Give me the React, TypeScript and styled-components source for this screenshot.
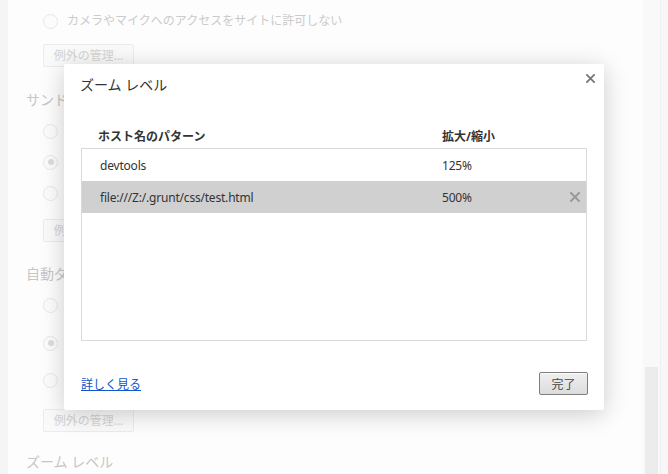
import React from 'react';
import styled, { createGlobalStyle } from 'styled-components';

const GlobalStyle = createGlobalStyle`
  html, body {
    margin: 0;
    padding: 0;
  }
  body {
    width: 668px;
    height: 474px;
    overflow: hidden;
    background: #fdfdfd;
    font-family: "Noto Sans", "Noto Sans CJK JP", sans-serif;
  }
`;

const Page = styled.div`
  position: relative;
  display: flex;
  width: 668px;
  height: 474px;
  overflow: hidden;
  background: #fdfdfd;
`;

const SideStrip = styled.div`
  flex: none;
  width: 8px;
  background: #f5f5f5;
`;

const Settings = styled.div`
  flex: 1;
  display: flex;
  flex-direction: column;
  align-items: flex-start;
  padding: 9px 0 0 18px;
  font-size: 12px;
  color: #cbcbcb;
`;

const SectionTitle = styled.div<{ gap: number }>`
  box-sizing: border-box;
  margin-top: ${p => p.gap}px;
  height: 20px;
  padding-top: 2px;
  line-height: 16px;
  font-size: 14px;
  color: #c6c6c6;
  white-space: nowrap;
`;

const RadioRow = styled.div<{ gap: number; tall?: boolean }>`
  display: flex;
  align-items: center;
  gap: 9px;
  margin-top: ${p => p.gap}px;
  margin-left: 17px;
  height: ${p => (p.tall ? 36 : 24)}px;
  line-height: ${p => (p.tall ? 17 : 24)}px;
  white-space: nowrap;
`;

const Radio = styled.span<{ checked?: boolean }>`
  flex: none;
  box-sizing: border-box;
  width: 15px;
  height: 15px;
  border-radius: 50%;
  border: 1px solid #e8e8e8;
  background: #fcfcfc;
  display: flex;
  align-items: center;
  justify-content: center;

  &::after {
    content: '';
    display: ${p => (p.checked ? 'block' : 'none')};
    width: 6px;
    height: 6px;
    border-radius: 50%;
    background: #dcdcdc;
  }
`;

const GhostButton = styled.div<{ gap: number }>`
  box-sizing: border-box;
  margin-top: ${p => p.gap}px;
  margin-left: 17px;
  width: 91px;
  height: 23px;
  line-height: 21px;
  border: 1px solid #ececec;
  border-radius: 2px;
  background: #fafafa;
  color: #d4d4d4;
  text-align: center;
  white-space: nowrap;
`;

const ScrollTrack = styled.div`
  flex: none;
  width: 17px;
  display: flex;
  flex-direction: column;
  justify-content: flex-end;
  align-items: center;
  background: #f9f9f9;
`;

const ScrollThumb = styled.div`
  width: 13px;
  height: 107px;
  background: #ececec;
`;

const RightEdge = styled.div`
  flex: none;
  width: 8px;
  box-sizing: border-box;
  border-left: 1px solid #f0f0f0;
  background: #f7f7f7;
`;

/* dialog */

const Dialog = styled.div`
  position: absolute;
  left: 64px;
  top: 64px;
  box-sizing: border-box;
  width: 540px;
  height: 346px;
  padding: 0 17px 15px;
  display: flex;
  flex-direction: column;
  background: #fff;
  border-radius: 2px;
  box-shadow: 0 4px 24px rgba(0, 0, 0, 0.2);
  color: #333;
  font-size: 12px;
`;

const TitleBar = styled.div`
  height: 44px;
  display: flex;
  align-items: center;
`;

const Title = styled.h1`
  margin: -2px 0 0 -1px;
  font-size: 14px;
  line-height: 16px;
  font-weight: normal;
  color: #333;
`;

const CloseButton = styled.button`
  position: absolute;
  top: 9px;
  right: 9px;
  width: 10px;
  height: 10px;
  padding: 0;
  border: 0;
  background: none;
  display: flex;
  align-items: center;
  justify-content: center;
`;

const ColumnHeader = styled.div`
  height: 40px;
  box-sizing: border-box;
  padding: 0 0 3px 17px;
  display: grid;
  grid-template-columns: 344px 1fr;
  align-items: end;
  font-weight: bold;
  line-height: 16px;
`;

const List = styled.div`
  box-sizing: border-box;
  height: 193px;
  border: 1px solid #d9d9d9;
`;

const Row = styled.div<{ selected?: boolean }>`
  height: 32px;
  padding-left: 18px;
  display: grid;
  grid-template-columns: 342px 1fr 22px;
  align-items: center;
  background: ${p => (p.selected ? '#d0d0d0' : 'transparent')};
  color: #333;
  letter-spacing: -0.2px;
`;

const DeleteMark = styled.span`
  display: flex;
  align-items: center;
  justify-content: center;
`;

const Footer = styled.div`
  margin-top: auto;
  height: 23px;
  display: flex;
  align-items: center;
  justify-content: space-between;
`;

const MoreLink = styled.a`
  color: #15c;
  text-decoration: underline;
  font-size: 12px;
  cursor: pointer;
`;

const DoneButton = styled.button`
  box-sizing: border-box;
  width: 49px;
  height: 23px;
  margin-right: -1px;
  padding: 0;
  border: 1px solid #7e7e7e;
  border-radius: 2px;
  background: linear-gradient(#f0f0f0, #dcdcdc);
  box-shadow: inset 0 1px 0 #fafafa;
  color: #444;
  font-family: "Noto Sans CJK JP", sans-serif;
  font-size: 12px;
`;

const CrossIcon: React.FC<{ size: number; color: string; weight: number }> = ({ size, color, weight }) => (
  <svg width={size} height={size} viewBox="0 0 10 10">
    <path d="M1 1L9 9M9 1L1 9" stroke={color} strokeWidth={weight} strokeLinecap="square" />
  </svg>
);

interface ZoomEntry {
  host: string;
  zoom: string;
  selected?: boolean;
}

const entries: ZoomEntry[] = [
  { host: 'devtools', zoom: '125%' },
  { host: 'file:///Z:/.grunt/css/test.html', zoom: '500%', selected: true },
];

const App: React.FC = () => (
  <Page>
    <GlobalStyle />
    <SideStrip />
    <Settings>
      <RadioRow gap={0}>
        <Radio />
        カメラやマイクへのアクセスをサイトに許可しない
      </RadioRow>
      <GhostButton gap={11}>例外の管理...</GhostButton>

      <SectionTitle gap={23}>サンド</SectionTitle>
      <RadioRow gap={9}>
        <Radio />
      </RadioRow>
      <RadioRow gap={7}>
        <Radio checked />
      </RadioRow>
      <RadioRow gap={7}>
        <Radio />
      </RadioRow>
      <GhostButton gap={14}>例外の管理...</GhostButton>

      <SectionTitle gap={22}>自動ダウンロード</SectionTitle>
      <RadioRow gap={9}>
        <Radio />
      </RadioRow>
      <RadioRow gap={8} tall>
        <Radio checked />
        <span>
          最初のファイル後にサイトがファイルを自動的にダウンロードしようとしたときに確認する（推
          <br />
          奨）
        </span>
      </RadioRow>
      <RadioRow gap={7}>
        <Radio />
      </RadioRow>
      <GhostButton gap={17}>例外の管理...</GhostButton>

      <SectionTitle gap={20}>ズーム レベル</SectionTitle>
    </Settings>
    <ScrollTrack>
      <ScrollThumb />
    </ScrollTrack>
    <RightEdge />

    <Dialog>
      <TitleBar>
        <Title>ズーム レベル</Title>
      </TitleBar>
      <CloseButton aria-label="閉じる">
        <CrossIcon size={9} color="#777" weight={2} />
      </CloseButton>
      <ColumnHeader>
        <span>ホスト名のパターン</span>
        <span>拡大/縮小</span>
      </ColumnHeader>
      <List>
        {entries.map(e => (
          <Row key={e.host} selected={e.selected}>
            <span>{e.host}</span>
            <span>{e.zoom}</span>
            <DeleteMark>{e.selected && <CrossIcon size={10} color="#9a9a9a" weight={2} />}</DeleteMark>
          </Row>
        ))}
      </List>
      <Footer>
        <MoreLink>詳しく見る</MoreLink>
        <DoneButton>完了</DoneButton>
      </Footer>
    </Dialog>
  </Page>
);

export default App;
